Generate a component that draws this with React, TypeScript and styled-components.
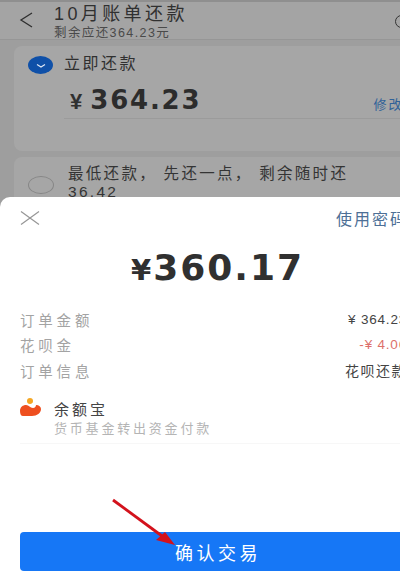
import React from "react";
import styled, { createGlobalStyle } from "styled-components";

const GlobalStyle = createGlobalStyle`
  html, body {
    margin: 0;
    padding: 0;
    background: #9e9e9e;
  }
  body {
    font-family: "Liberation Sans", "Noto Sans CJK SC", sans-serif;
    overflow: hidden;
  }
`;

const Screen = styled.div`
  width: 400px;
  height: 579px;
  overflow: hidden;
  display: flex;
  flex-direction: column;
  background: #9e9e9e;
`;

const Backdrop = styled.div`
  height: 197px;
  flex: none;
  overflow: hidden;
  border-top: 2px solid #8f8f8f;
  box-sizing: border-box;
`;

const Header = styled.header`
  height: 37px;
  display: flex;
  align-items: flex-start;
  background: #a4a4a4;
  border-bottom: 1px solid #969696;
  position: relative;
`;

const BackButton = styled.svg`
  width: 14px;
  height: 18px;
  margin: 9px 0 0 19px;
  flex: none;
`;

const HeaderText = styled.div`
  margin-left: 21px;
  display: flex;
  flex-direction: column;
`;

const Title = styled.div`
  font-size: 18px;
  line-height: 24px;
  letter-spacing: 3.4px;
  white-space: nowrap;
  color: #303030;
`;

const Subtitle = styled.div`
  font-size: 12.5px;
  line-height: 14px;
  letter-spacing: 1.4px;
  white-space: nowrap;
  color: #4a4a4a;
`;

const HeaderIcon = styled.div`
  position: absolute;
  left: 395px;
  top: 13px;
  width: 11px;
  height: 11px;
  border: 1.5px solid #333;
  border-radius: 50%;
`;

const Card = styled.section<{ $height: number }>`
  margin: 6px 0 0 14px;
  width: 440px;
  height: ${(p) => p.$height}px;
  background: #a6a6a6;
  border-radius: 8px;
  display: grid;
  grid-template-columns: 50px 1fr;
`;

const RadioCell = styled.div<{ $top: number }>`
  padding: ${(p) => p.$top}px 0 0 14px;
`;

const CheckedRadio = styled.div`
  width: 25px;
  height: 18px;
  border-radius: 50%;
  background: #0f50a8;
  display: flex;
  align-items: center;
  justify-content: center;
`;

const EmptyRadio = styled.div`
  width: 24px;
  height: 16px;
  border-radius: 50%;
  border: 1px solid #868686;
`;

const CardLabel = styled.div`
  margin-top: 8px;
  font-size: 16px;
  line-height: 20px;
  letter-spacing: 2.5px;
  color: #303030;
`;

const AmountRow = styled.div`
  display: flex;
  align-items: baseline;
  width: 400px;
  height: 37px;
  margin-top: 8px;
  border-bottom: 1px solid #9b9b9b;
  box-sizing: border-box;
`;

const AmountSign = styled.span`
  font-size: 22px;
  font-weight: 700;
  color: #303030;
  margin: 0 8px 0 6px;
`;

const AmountValue = styled.span`
  font-family: "DejaVu Sans", sans-serif;
  font-size: 26px;
  font-weight: 700;
  letter-spacing: 1.8px;
  line-height: 36px;
  color: #2c2c2c;
`;

const EditLink = styled.span`
  align-self: flex-end;
  margin: 0 0 6px 172px;
  font-size: 13px;
  line-height: 15px;
  letter-spacing: 2px;
  white-space: nowrap;
  color: #2f6198;
`;

const MinText = styled.div`
  margin: 8px 0 0 4px;
  font-size: 15.5px;
  line-height: 18px;
  letter-spacing: 2.3px;
  white-space: nowrap;
  color: #343434;
`;

const Sheet = styled.main`
  flex: 1;
  background: #fff;
  border-radius: 10px 10px 0 0;
  display: flex;
  flex-direction: column;
  width: 460px;
  box-sizing: border-box;
  padding: 0 0 0 20px;
`;

const SheetTop = styled.div`
  display: flex;
  align-items: center;
  justify-content: space-between;
  height: 42px;
  width: 388px;
`;

const CloseIcon = styled.svg`
  width: 20px;
  height: 16px;
`;

const PasswordLink = styled.span`
  font-size: 16px;
  letter-spacing: 2px;
  white-space: nowrap;
  color: #4d6f96;
`;

const Total = styled.div`
  width: 395px;
  text-align: center;
  font-family: "DejaVu Sans", sans-serif;
  font-size: 36px;
  line-height: 44px;
  font-weight: 700;
  letter-spacing: 2px;
  color: #303030;
  margin-top: 7px;
`;

const TotalSign = styled.span`
  font-size: 29px;
`;

const Rows = styled.div`
  margin-top: 17px;
  display: flex;
  flex-direction: column;
  gap: 5.5px;
`;

const Row = styled.div`
  display: flex;
  justify-content: space-between;
  width: 387px;
  height: 20px;
  align-items: center;
`;

const RowLabel = styled.span`
  font-size: 14.5px;
  color: #a3a3a3;
  letter-spacing: 3.8px;
`;

const RowValue = styled.span<{ $red?: boolean }>`
  font-size: 13.5px;
  letter-spacing: 0.8px;
  white-space: nowrap;
  color: ${(p) => (p.$red ? "#dd706b" : "#444")};
`;

const RowText = styled(RowValue)`
  font-size: 14px;
  letter-spacing: 1.5px;
`;

const PayMethod = styled.div`
  margin-top: 18px;
  display: grid;
  grid-template-columns: 34px 1fr;
  height: 46px;
  width: 400px;
  box-sizing: border-box;
  border-bottom: 1px solid #f7f7f7;
`;

const PayLogo = styled.svg`
  width: 21px;
  height: 18px;
`;

const PayName = styled.div`
  margin-top: 3px;
  font-size: 15px;
  line-height: 18px;
  letter-spacing: 3px;
  color: #444;
`;

const PayHint = styled.div`
  margin-top: 1px;
  font-size: 13px;
  line-height: 17px;
  letter-spacing: 2.8px;
  white-space: nowrap;
  color: #b4b4b4;
`;

const ConfirmButton = styled.button`
  margin-top: 88px;
  width: 420px;
  height: 39px;
  border: 0;
  border-radius: 4px;
  background: #1677f6;
  color: #fff;
  font-family: inherit;
  font-size: 18px;
  letter-spacing: 3.5px;
  padding: 0;
  text-align: left;
  text-indent: 155px;
`;

const Arrow = styled.svg`
  position: absolute;
  left: 108px;
  top: 496px;
  width: 70px;
  height: 62px;
`;

const App: React.FC = () => {
  return (
    <Screen>
      <GlobalStyle />
      <Backdrop>
        <Header>
          <BackButton viewBox="0 0 14 18">
            <path d="M13 2 2 9l11 7" fill="none" stroke="#2e2e2e" strokeWidth="1.3" />
          </BackButton>
          <HeaderText>
            <Title>10月账单还款</Title>
            <Subtitle>剩余应还364.23元</Subtitle>
          </HeaderText>
          <HeaderIcon />
        </Header>
        <Card $height={105}>
          <RadioCell $top={10}>
            <CheckedRadio>
              <svg width="12" height="7" viewBox="0 0 12 7">
                <path d="M2 2.5 6 5l4-2.5" fill="none" stroke="#dfe8f5" strokeWidth="1.2" />
              </svg>
            </CheckedRadio>
          </RadioCell>
          <div>
            <CardLabel>立即还款</CardLabel>
            <AmountRow>
              <AmountSign>¥</AmountSign>
              <AmountValue>364.23</AmountValue>
              <EditLink>修改金额</EditLink>
            </AmountRow>
          </div>
        </Card>
        <Card $height={60}>
          <RadioCell $top={19}>
            <EmptyRadio />
          </RadioCell>
          <MinText>
            最低还款， 先还一点， 剩余随时还
            <br />
            36.42
          </MinText>
        </Card>
      </Backdrop>
      <Sheet>
        <SheetTop>
          <CloseIcon viewBox="0 0 20 16">
            <path d="M1 1.5l18 13M19 1.5 1 14.5" fill="none" stroke="#969696" strokeWidth="1.2" />
          </CloseIcon>
          <PasswordLink>使用密码</PasswordLink>
        </SheetTop>
        <Total>
          <TotalSign>¥</TotalSign>360.17
        </Total>
        <Rows>
          <Row>
            <RowLabel>订单金额</RowLabel>
            <RowValue>¥ 364.23</RowValue>
          </Row>
          <Row>
            <RowLabel>花呗金</RowLabel>
            <RowValue $red>-¥ 4.06</RowValue>
          </Row>
          <Row>
            <RowLabel>订单信息</RowLabel>
            <RowText>花呗还款</RowText>
          </Row>
        </Rows>
        <PayMethod>
          <PayLogo viewBox="0 0 21 18">
            <circle cx="10" cy="3" r="3" fill="#f5a623" />
            <path d="M0 13c0-4 3-6 6-6 3 0 4 3 7 3 2 0 3-2 3-3 3 0 5 2 5 4 0 4-4 7-9 7H3c-2 0-3-2-3-5z" fill="#ee4f1f" />
            <path d="M12 6c2-1 4 0 4 1" fill="none" stroke="#fff" strokeWidth="1.4" />
          </PayLogo>
          <div>
            <PayName>余额宝</PayName>
            <PayHint>货币基金转出资金付款</PayHint>
          </div>
        </PayMethod>
        <ConfirmButton>确认交易</ConfirmButton>
      </Sheet>
      <Arrow viewBox="0 0 70 62">
        <path d="M5 4 54 40" stroke="#d3121c" strokeWidth="2.8" fill="none" />
        <path d="M67 49 57 36 48 44z" fill="#d3121c" />
      </Arrow>
    </Screen>
  );
};

export default App;
